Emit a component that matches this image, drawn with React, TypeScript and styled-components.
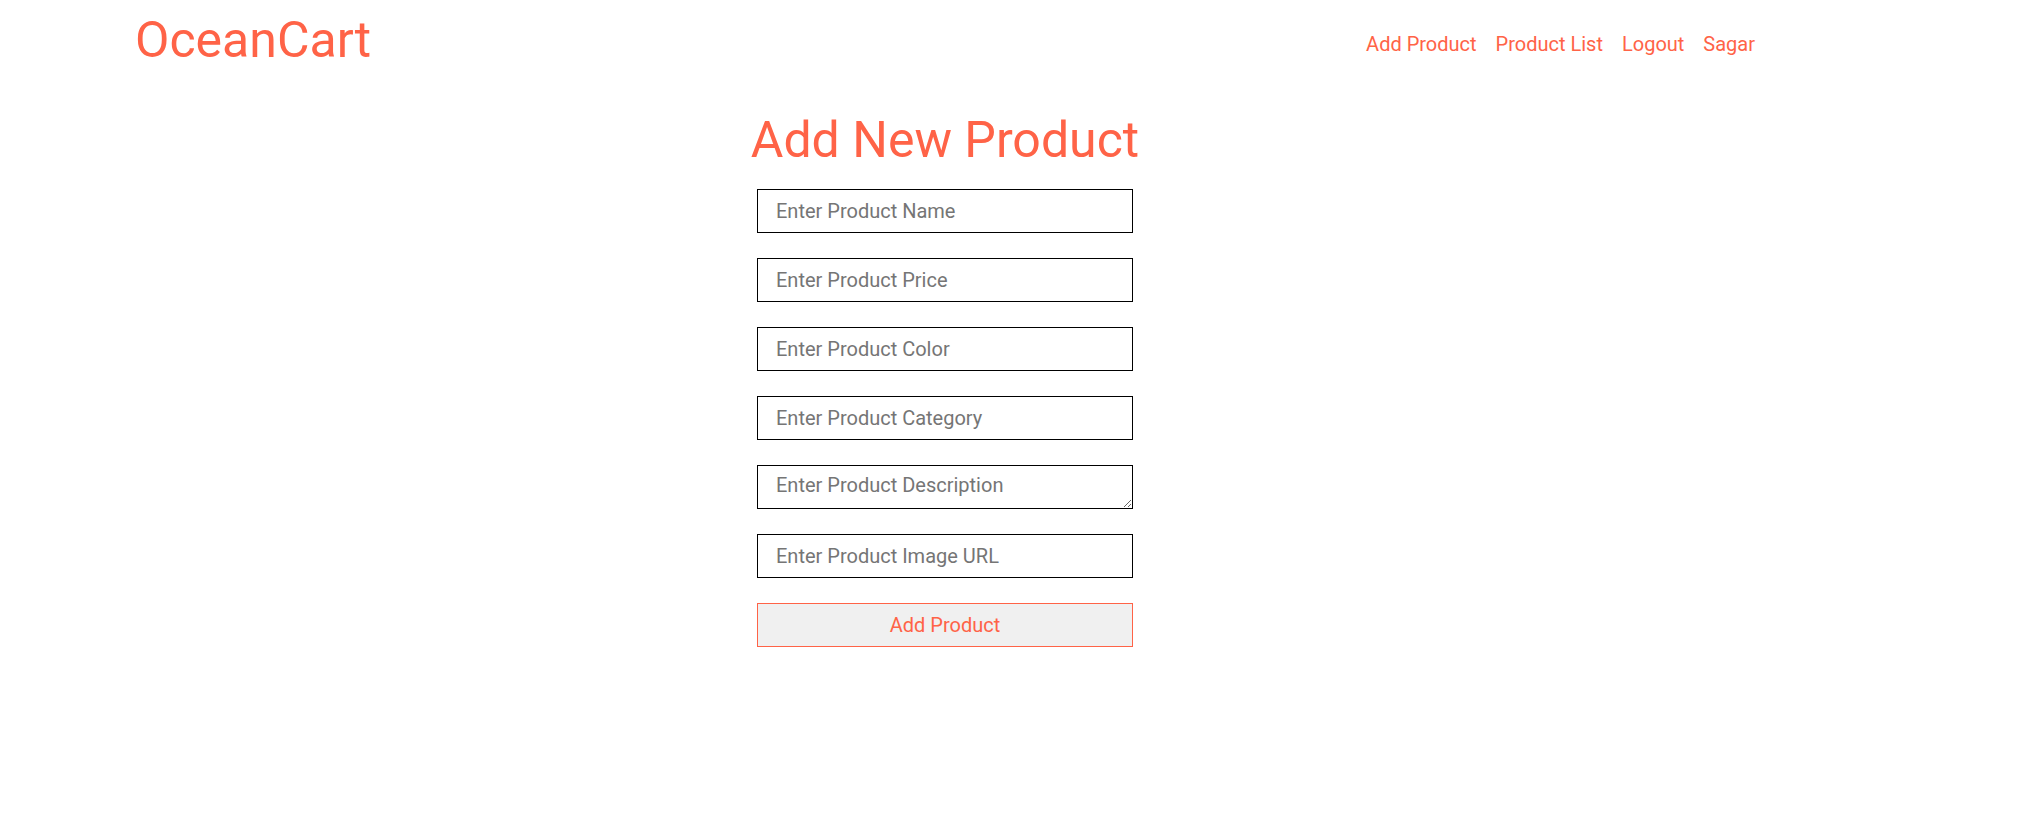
import { createGlobalStyle } from 'styled-components';
import styled from 'styled-components';

const GlobalStyle = createGlobalStyle`
  body {
    margin: 0;
    background: #fff;
    font-family: Roboto, "Liberation Sans", sans-serif;
  }
`;

const Shell = styled.div`
  width: 1620px;
  margin-left: 135px;
`;

const Header = styled.header`
  display: flex;
  justify-content: space-between;
  align-items: flex-start;
  padding-top: 11px;
`;

const Logo = styled.h1`
  margin: 0;
  font-size: 50px;
  font-weight: 400;
  color: tomato;
`;

const Nav = styled.nav`
  display: flex;
  gap: 19px;
  margin-top: 21px;
  a {
    font-size: 20px;
    color: tomato;
    text-decoration: none;
  }
`;

const Main = styled.main`
  display: flex;
  flex-direction: column;
  align-items: center;
`;

const Title = styled.h2`
  margin: 42px 0 20px;
  font-size: 50px;
  font-weight: 400;
  color: tomato;
`;

const Form = styled.form`
  display: flex;
  flex-direction: column;
  gap: 25px;
  width: 376px;
`;

const Field = styled.input`
  box-sizing: border-box;
  width: 100%;
  height: 44px;
  margin: 0;
  padding: 8px 18px;
  border: 1px solid #000;
  border-radius: 0;
  font-family: Roboto, "Liberation Sans", sans-serif;
  font-size: 20px;
  outline: none;
  &::placeholder {
    color: #757575;
  }
`;

const Area = styled(Field).attrs({ as: 'textarea' })`
  display: block;
  padding: 7px 18px;
  resize: vertical;
`;

const Submit = styled.button`
  box-sizing: border-box;
  width: 100%;
  height: 44px;
  margin: 0;
  border: 1px solid tomato;
  background: #f0f0f0;
  color: tomato;
  font-family: Roboto, "Liberation Sans", sans-serif;
  font-size: 20px;
  cursor: pointer;
`;

export default function App() {
  return (
    <>
      <GlobalStyle />
      <Shell>
        <Header>
          <Logo>OceanCart</Logo>
          <Nav>
            <a href="#">Add Product</a>
            <a href="#">Product List</a>
            <a href="#">Logout</a>
            <a href="#">Sagar</a>
          </Nav>
        </Header>
        <Main>
          <Title>Add New Product</Title>
          <Form onSubmit={(e) => e.preventDefault()}>
            <Field type="text" placeholder="Enter Product Name" />
            <Field type="text" placeholder="Enter Product Price" />
            <Field type="text" placeholder="Enter Product Color" />
            <Field type="text" placeholder="Enter Product Category" />
            <Area placeholder="Enter Product Description" />
            <Field type="text" placeholder="Enter Product Image URL" />
            <Submit type="submit">Add Product</Submit>
          </Form>
        </Main>
      </Shell>
    </>
  );
}
